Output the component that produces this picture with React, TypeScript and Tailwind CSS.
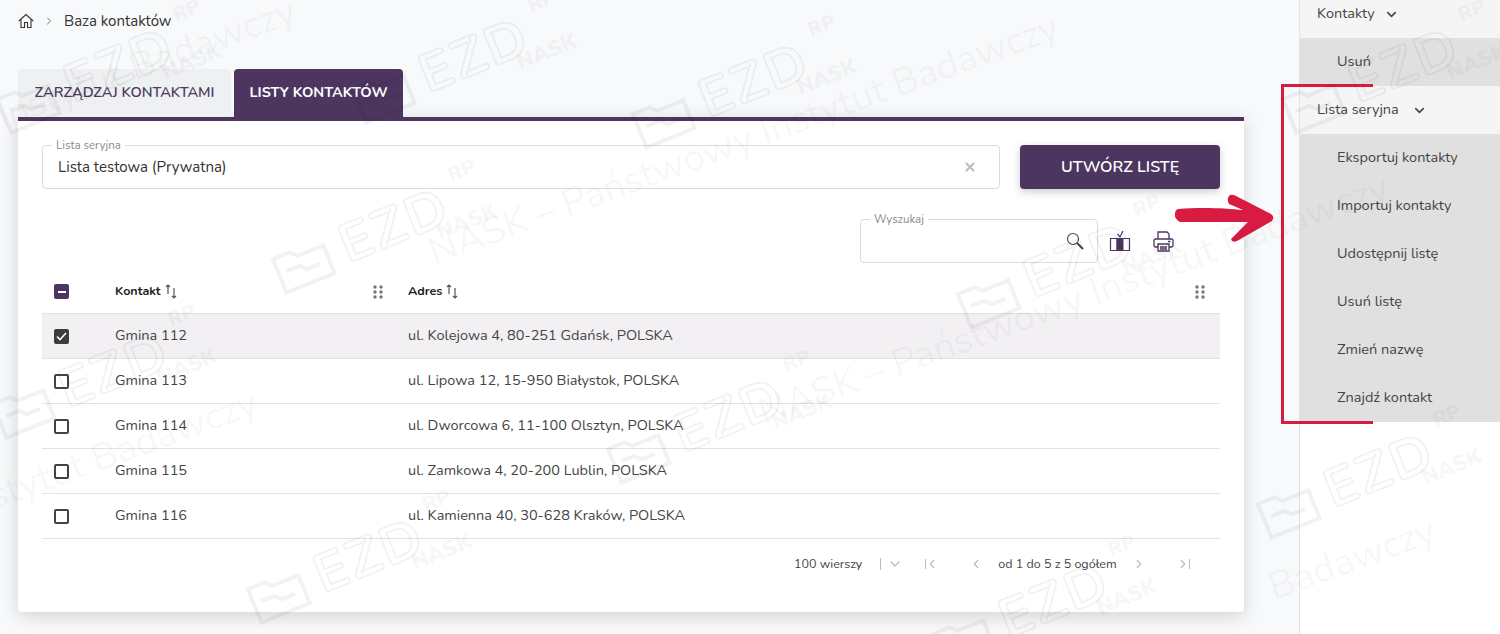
import { ChevronDown, ChevronLeft, ChevronRight, X } from 'lucide-react';

const FONT = "font-['Nunito','Open_Sans','Noto_Sans',sans-serif]";

const contacts = [
  { name: 'Gmina 112', address: 'ul. Kolejowa 4, 80-251 Gdańsk, POLSKA', selected: true },
  { name: 'Gmina 113', address: 'ul. Lipowa 12, 15-950 Białystok, POLSKA' },
  { name: 'Gmina 114', address: 'ul. Dworcowa 6, 11-100 Olsztyn, POLSKA' },
  { name: 'Gmina 115', address: 'ul. Zamkowa 4, 20-200 Lublin, POLSKA' },
  { name: 'Gmina 116', address: 'ul. Kamienna 40, 30-628 Kraków, POLSKA' },
];

const listActions = ['Eksportuj kontakty', 'Importuj kontakty', 'Udostępnij listę', 'Usuń listę', 'Zmień nazwę', 'Znajdź kontakt'];

// watermark pieces, they lie over the whole page
const logos = [
  [-10, 30], [345, 20], [625, 45], [1275, 30], [265, 190], [950, 225], [-15, 335],
  [600, 380], [1250, 435], [240, 520], [925, 565],
];
const slogans = [
  [-60, 110, 'wy Instytut Badawczy'],
  [430, 225, 'NASK – Państwowy Instytut Badawczy'],
  [760, 385, 'NASK – Państwowy Instytut Badawczy'],
  [-40, 480, 'Instytut Badawczy'],
  [1270, 560, 'Badawczy'],
] as const;

function Watermark() {
  return (
    <div className="pointer-events-none absolute inset-0 overflow-hidden">
      {logos.map(([x, y]) => (
        <div key={`${x}-${y}`} className="absolute flex w-[260px] -rotate-[22deg] items-center gap-3" style={{ left: x, top: y }}>
          <svg width="60" height="56" viewBox="0 0 60 56" fill="none" stroke="#000" strokeOpacity="0.05" strokeWidth="4">
            <path d="M4 14h18l6 6h28v30H4z" />
            <path d="M12 30h14l6 6h14" />
          </svg>
          <span className="text-[54px] leading-none font-bold tracking-wider text-transparent [-webkit-text-stroke:2px_rgba(0,0,0,0.05)]">EZD</span>
          <div className="flex flex-col self-start">
            <span className="text-[20px] leading-none font-black text-black/5">RP</span>
            <span className="mt-7 -ml-8 text-[22px] leading-none font-black text-black/5">NASK</span>
          </div>
        </div>
      ))}
      {slogans.map(([x, y, label]) => (
        <div key={label + x} className="absolute origin-left -rotate-[20deg] text-[38px] whitespace-nowrap text-black/[0.045]" style={{ left: x, top: y }}>
          {label}
        </div>
      ))}
    </div>
  );
}

function HomeIcon() {
  return (
    <svg width="16" height="16" viewBox="0 0 16 16" fill="none" stroke="#333" strokeWidth="1.1">
      <path d="M0.8 8 8 1.5 15.2 8" />
      <path d="M3 6.5V14.5H6.5V9.5H9.5V14.5H13V6.5" />
    </svg>
  );
}

function SortIcon() {
  return (
    <svg width="12" height="15" viewBox="0 0 12 15" fill="none" stroke="#555" strokeWidth="1.2" className="ml-1">
      <path d="M3 10V1M1 3l2-2 2 2" />
      <path d="M9 4v10M7 12l2 2 2-2" />
    </svg>
  );
}

function DragDots() {
  return (
    <svg width="10" height="14" viewBox="0 0 10 14" fill="#777">
      {[2, 7, 12].map((cy) => (
        <g key={cy}>
          <circle cx="2" cy={cy} r="1.7" />
          <circle cx="8" cy={cy} r="1.7" />
        </g>
      ))}
    </svg>
  );
}

function Checkbox({ checked }: { checked?: boolean }) {
  if (checked) {
    return (
      <span className="flex h-[15px] w-[15px] items-center justify-center rounded-[2px] bg-[#3d3d3d]">
        <svg width="11" height="9" viewBox="0 0 11 9" fill="none" stroke="#fff" strokeWidth="1.6">
          <path d="M1 4.5 4 7.5 10 1" />
        </svg>
      </span>
    );
  }
  return <span className="h-[15px] w-[15px] rounded-[2px] border-2 border-[#444]" />;
}

function OutlinedField({ label, className, children }: { label: string; className: string; children?: React.ReactNode }) {
  return (
    <div className={`relative flex h-[44px] items-center rounded-[4px] border border-[#dcdcdc] bg-white ${className}`}>
      <span className="absolute -top-[7px] left-[9px] bg-white px-[4px] text-[11.5px] leading-[13px] text-[#8b8b8b]">{label}</span>
      {children}
    </div>
  );
}

function ContactRow({ name, address, selected }: { name: string; address: string; selected?: boolean }) {
  return (
    <div className={`grid h-[45px] grid-cols-[73px_293px_1fr] items-center border-b border-[#e2e2e2] text-[14.5px] text-[#444] ${selected ? 'bg-[#f2f0f3]' : ''}`}>
      <div className="pl-[12px] flex">
        <Checkbox checked={selected} />
      </div>
      <div>{name}</div>
      <div>{address}</div>
    </div>
  );
}

function SideItem({ label }: { label: string }) {
  return <div className="flex h-[48px] items-center pl-[37px] text-[14.5px] text-[#444]">{label}</div>;
}

function SideHeader({ label, gap }: { label: string; gap: string }) {
  return (
    <div className="flex h-[48px] items-center bg-[#f5f5f5] pl-[17px] text-[14.5px] text-[#444]">
      {label}
      <ChevronDown size={15} strokeWidth={2.5} className={gap} />
    </div>
  );
}

export default function App() {
  return (
    <div className={`relative flex h-[634px] w-[1500px] overflow-hidden bg-white ${FONT}`}>
      <main className="h-full w-[1299px] bg-[#f8f9fb] pl-[18px] pr-[55px]">
        <nav className="flex h-[42px] items-center text-[15px] text-[#333]">
          <HomeIcon />
          <ChevronRight size={12} className="mx-[9px] text-[#777]" />
          <span>Baza kontaktów</span>
        </nav>

        <div className="mt-[27px] flex gap-[3px] text-[14.5px]">
          <div className="flex h-[48px] w-[213px] items-center justify-center rounded-t-[4px] bg-[#eff0f2] font-semibold text-[#4b3a5c]">ZARZĄDZAJ KONTAKTAMI</div>
          <div className="flex h-[48px] w-[169px] items-center justify-center rounded-t-[4px] bg-[#4c3660] font-bold text-white">LISTY KONTAKTÓW</div>
        </div>

        <section className="h-[495px] rounded-b-[4px] border-t-4 border-[#4c3660] bg-white px-[24px] pt-[24px] shadow-[0_4px_18px_rgba(0,0,0,0.16)]">
          <div className="flex gap-[20px]">
            <OutlinedField label="Lista seryjna" className="w-[958px] justify-between pl-[15px] pr-[22px] text-[15px] text-[#333]">
              <span>Lista testowa (Prywatna)</span>
              <X size={14} strokeWidth={3.5} className="text-[#bdbdbd]" />
            </OutlinedField>
            <button className="h-[44px] w-[200px] rounded-[4px] bg-[#4c3660] text-[16px] font-semibold text-white shadow-[0_3px_8px_rgba(0,0,0,0.2)]">UTWÓRZ LISTĘ</button>
          </div>

          <div className="mt-[30px] flex items-center">
            <OutlinedField label="Wyszukaj" className="ml-[818px] w-[238px] justify-end pr-[13px]">
              <svg width="18" height="18" viewBox="0 0 18 18" fill="none" stroke="#444" strokeWidth="1.1">
                <circle cx="7" cy="7" r="5.5" />
                <path d="M11 11 17 17" strokeWidth="2" />
              </svg>
            </OutlinedField>
            <svg width="22" height="22" viewBox="0 0 22 22" fill="none" className="ml-[11px]" stroke="#4c3660">
              <path d="M1.5 8.5H20.5V20.5H1.5Z" strokeWidth="1.2" />
              <path d="M8 8.5H14V20.5H8Z" fill="#4c3660" />
              <path d="M1.5 8.5H8V20.5" fill="none" />
              <path d="M8.5 4 11 7l3-6" strokeWidth="1.2" />
            </svg>
            <svg width="21" height="21" viewBox="0 0 21 21" fill="none" className="ml-[22px]" stroke="#4c3660" strokeWidth="1.3">
              <path d="M5 8V1H14L16 3V8" />
              <path d="M5 16H2.5A1.5 1.5 0 0 1 1 14.500V9.500A1.500 1.500 0 0 1 2.500 8H18.500A1.500 1.500 0 0 1 20 9.500V14.500A1.500 1.500 0 0 1 18.500 16H16" />
              <path d="M5 13H16V20H5Z" />
              <path d="M7 16H14M7 18H14M15 10.500H17.500" />
            </svg>
          </div>

          <div className="mt-[7px] w-[1178px]">
            <div className="grid h-[44px] grid-cols-[73px_293px_1fr] items-center border-b border-[#e2e2e2] text-[12.5px] font-bold text-[#222]">
              <div className="pl-[12px] flex">
                <span className="flex h-[15px] w-[15px] items-center justify-center rounded-[2px] bg-[#4c3660]">
                  <span className="h-[2px] w-[8px] bg-white" />
                </span>
              </div>
              <div className="flex items-center justify-between pr-[25px]">
                <span className="flex items-center">Kontakt<SortIcon /></span>
                <DragDots />
              </div>
              <div className="flex items-center justify-between pr-[15px]">
                <span className="flex items-center">Adres<SortIcon /></span>
                <DragDots />
              </div>
            </div>
            {contacts.map((c) => (
              <ContactRow key={c.name} {...c} />
            ))}
          </div>

          <div className="mt-[13px] flex h-[24px] w-[1178px] items-center pl-[752px] text-[12.5px] text-[#444]">
            <span>100 wierszy</span>
            <span className="ml-[18px] h-[12px] w-px bg-[#bbb]" />
            <ChevronDown size={16} className="ml-[6px] text-[#bbb]" />
            <span className="ml-[22px] h-[10px] w-px bg-[#bbb]" />
            <ChevronLeft size={14} className="-ml-[1px] text-[#bbb]" />
            <ChevronLeft size={14} className="ml-[30px] text-[#bbb]" />
            <span className="ml-[15px]">od 1 do 5 z 5 ogółem</span>
            <ChevronRight size={14} className="ml-[15px] text-[#bbb]" />
            <ChevronRight size={14} className="ml-[30px] text-[#bbb]" />
            <span className="-ml-[1px] h-[10px] w-px bg-[#bbb]" />
          </div>
        </section>
      </main>

      <aside className="-mt-[10px] h-[644px] w-[201px] border-l border-[#e4e4e4] bg-white">
        <SideHeader label="Kontakty" gap="ml-[9px]" />
        <div className="bg-[#e0e0e0]">
          <SideItem label="Usuń" />
        </div>
        <SideHeader label="Lista seryjna" gap="ml-[13px]" />
        <div className="bg-[#e0e0e0]">
          {listActions.map((a) => (
            <SideItem key={a} label={a} />
          ))}
        </div>
      </aside>

      {/* red callout drawn on top of the screenshot */}
      <div className="absolute top-[84px] left-[1281px] h-[340px] w-[92px] border-t-[3px] border-b-[3px] border-l-[3px] border-[#d81b40]" />
      <svg className="absolute top-[190px] left-[1170px]" width="110" height="60" viewBox="1170 190 110 60" fill="#d81b40">
        <path d="M1178 209C1200 207 1225 208 1243 210L1229 204Q1226 198 1230 195Q1233 194 1238 197L1271 214Q1275 217 1272 221L1237 241Q1232 243 1231 239L1248 222C1220 222 1195 222 1180 222Q1174 218 1175 214Q1175 210 1178 209Z" />
      </svg>

      <Watermark />
    </div>
  );
}
